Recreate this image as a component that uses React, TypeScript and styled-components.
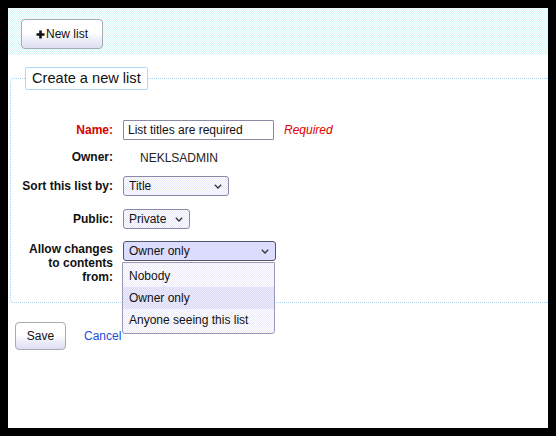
import React from "react";
import styled, { createGlobalStyle } from "styled-components";

const Global = createGlobalStyle`
  html, body { margin: 0; padding: 0; }
  body {
    margin: 0;
    padding: 8px;
    background: #000;
    font-family: "Liberation Sans", Arial, sans-serif;
    font-size: 12px;
    color: #000;
  }
  * { box-sizing: border-box; }
`;

const Page = styled.div`
  width: 540px;
  height: 420px;
  background: #fff;
  display: flex;
  flex-direction: column;
  overflow: hidden;
`;

const Toolbar = styled.div`
  height: 47px;
  padding: 11px 13px 6px;
  display: flex;
  align-items: flex-start;
  background-color: #fff;
  background-image: repeating-conic-gradient(#d2f6f6 0 25%, #ffffff 0 50%);
  background-size: 2px 2px;
`;

const Btn = styled.button<{ $w: number; $h: number }>`
  width: ${(p) => p.$w}px;
  height: ${(p) => p.$h}px;
  display: inline-flex;
  align-items: center;
  justify-content: center;
  gap: 1px;
  padding: 0;
  border: 1px solid #a9a9b4;
  border-radius: 4px;
  font-family: "Liberation Sans", Arial, sans-serif;
  font-size: 12px;
  color: #111;
  background: linear-gradient(#ffffff 0%, #ffffff 45%, #ebebf8 75%, #dedef2 100%);
  cursor: pointer;
`;

const PlusIcon = () => (
  <svg width="9" height="9" viewBox="0 0 9 9">
    <path d="M4.5 0.5 V8.5 M0.5 4.5 H8.5" stroke="#111" strokeWidth="2.6" />
  </svg>
);

const Fieldset = styled.fieldset`
  margin: 12px 0 0 2px;
  padding: 0 14px 18px 14px;
  border: 1px dotted #a6d2f4;
  border-right: none;
  border-radius: 4px 0 0 4px;
  min-width: 0;
`;

const Legend = styled.legend`
  height: 23px;
  padding: 0 6px;
  border: 1px solid #b3d9f7;
  border-radius: 2px;
  font-size: 14.6px;
  line-height: 21px;
  color: #111;
  margin-left: 0;
`;

const Rows = styled.div`
  display: flex;
  flex-direction: column;
  padding-top: 30px;
`;

const Row = styled.div<{ $mt: number }>`
  display: grid;
  grid-template-columns: 88px auto;
  column-gap: 10px;
  align-items: start;
  margin-top: ${(p) => p.$mt}px;
`;

const Label = styled.div<{ $required?: boolean; $pt?: number }>`
  display: flex;
  justify-content: flex-end;
  text-align: right;
  white-space: pre;
  font-weight: bold;
  font-size: 12px;
  line-height: 14px;
  padding-top: ${(p) => p.$pt ?? 3}px;
  color: ${(p) => (p.$required ? "#d40000" : "#111")};
`;

const Field = styled.div`
  display: flex;
  align-items: center;
  gap: 10px;
  position: relative;
`;

const TextInput = styled.input`
  width: 151px;
  height: 20px;
  padding: 0 4px;
  border: 1px solid #8a8aa6;
  border-radius: 1px;
  font-family: "Liberation Sans", Arial, sans-serif;
  font-size: 12px;
  color: #111;
  background: #fff;
  outline: none;
`;

const RequiredNote = styled.span`
  color: #e00000;
  font-style: italic;
  font-size: 12px;
`;

const Value = styled.div`
  padding-left: 17px;
  padding-top: 3px;
  font-size: 12px;
  line-height: 14px;
  color: #222;
`;

const SelectBox = styled.div<{ $w: number; $active?: boolean }>`
  width: ${(p) => p.$w}px;
  height: 20px;
  padding: 0 6px 0 5px;
  display: flex;
  align-items: center;
  justify-content: space-between;
  border: 1px solid ${(p) => (p.$active ? "#55556a" : "#8888a8")};
  border-radius: 3px;
  font-size: 12px;
  color: #111;
  background-color: ${(p) => (p.$active ? "#dcdcff" : "#f4f4ff")};
  background-image: ${(p) =>
    p.$active ? "none" : "repeating-conic-gradient(#e6e6fa 0 25%, #ffffff 0 50%)"};
  background-size: 2px 2px;
`;

const Chevron = () => (
  <svg width="8" height="5" viewBox="0 0 8 5">
    <path d="M0.8 0.8 L4 4 L7.2 0.8" stroke="#333" strokeWidth="1.3" fill="none" />
  </svg>
);

const Menu = styled.div`
  position: absolute;
  top: 21px;
  left: -1px;
  width: 153px;
  padding: 2px 0;
  border: 1px solid #9a9ab8;
  border-radius: 0 0 3px 3px;
  background-color: #f6f6ff;
  background-image: repeating-conic-gradient(#eaeafa 0 25%, #ffffff 0 50%);
  background-size: 2px 2px;
  z-index: 5;
`;

const Option = styled.div<{ $selected?: boolean }>`
  height: 22px;
  padding: 0 6px;
  display: flex;
  align-items: center;
  font-size: 12px;
  color: #111;
  background-color: ${(p) => (p.$selected ? "#e4e4fb" : "transparent")};
  background-image: ${(p) =>
    p.$selected ? "repeating-conic-gradient(#d8d8f6 0 25%, #eeeefd 0 50%)" : "none"};
  background-size: 2px 2px;
`;

const Actions = styled.div`
  display: flex;
  align-items: center;
  gap: 18px;
  margin: 19px 0 0 7px;
`;

const CancelLink = styled.a`
  color: #1a4fd8;
  text-decoration: none;
  font-size: 12px;
`;

export default function App() {
  return (
    <>
      <Global />
      <Page>
        <Toolbar>
          <Btn $w={82} $h={30}>
            <PlusIcon />
            New list
          </Btn>
        </Toolbar>
        <Fieldset>
          <Legend>Create a new list</Legend>
          <Rows>
            <Row $mt={0}>
              <Label $required>Name:</Label>
              <Field>
                <TextInput defaultValue="List titles are required" readOnly />
                <RequiredNote>Required</RequiredNote>
              </Field>
            </Row>
            <Row $mt={8}>
              <Label $pt={2}>Owner:</Label>
              <Value>NEKLSADMIN</Value>
            </Row>
            <Row $mt={11}>
              <Label>Sort this list by:</Label>
              <Field>
                <SelectBox $w={106}>
                  <span>Title</span>
                  <Chevron />
                </SelectBox>
              </Field>
            </Row>
            <Row $mt={13}>
              <Label>Public:</Label>
              <Field>
                <SelectBox $w={67}>
                  <span>Private</span>
                  <Chevron />
                </SelectBox>
              </Field>
            </Row>
            <Row $mt={12}>
              <Label $pt={1}>{"Allow changes\nto contents\nfrom:"}</Label>
              <Field>
                <SelectBox $w={153} $active>
                  <span>Owner only</span>
                  <Chevron />
                </SelectBox>
                <Menu>
                  <Option>Nobody</Option>
                  <Option $selected>Owner only</Option>
                  <Option>Anyone seeing this list</Option>
                </Menu>
              </Field>
            </Row>
          </Rows>
        </Fieldset>
        <Actions>
          <Btn $w={51} $h={28}>Save</Btn>
          <CancelLink href="#">Cancel</CancelLink>
        </Actions>
      </Page>
    </>
  );
}
